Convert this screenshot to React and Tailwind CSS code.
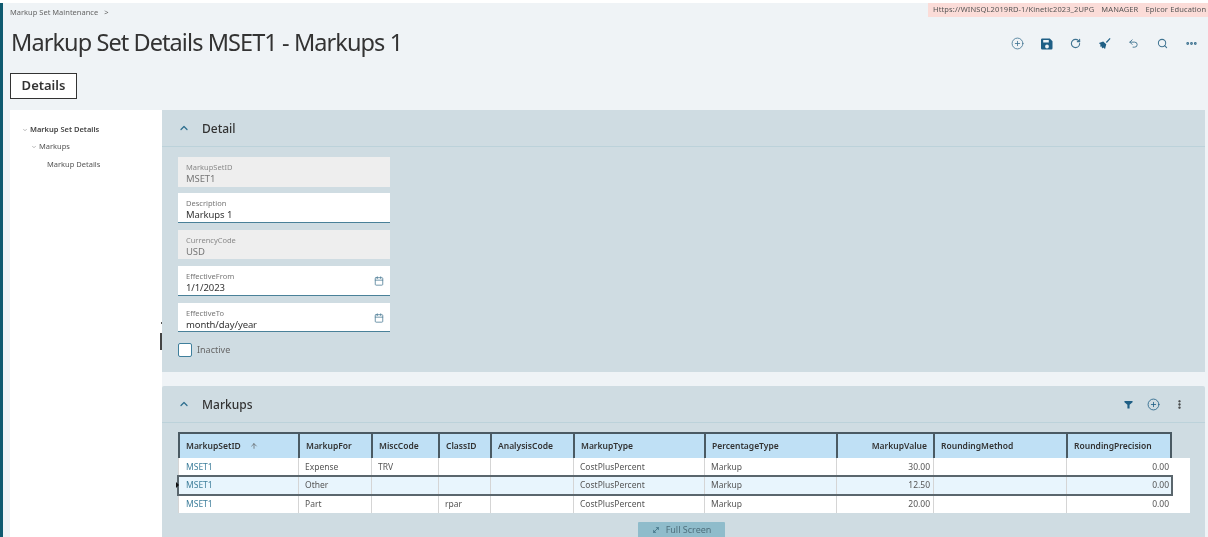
import React from "react";
import { CirclePlus, RotateCw, Undo2, Search, Ellipsis, ChevronUp, ChevronDown, ArrowUp, EllipsisVertical, Calendar, MoveDiagonal } from "lucide-react";

const cols = ["w-[120px]", "w-[73px]", "w-[67px]", "w-[52px]", "w-[83px]", "w-[131px]", "w-[132px]", "w-[97px]", "w-[133px]", "w-[106px]"];
const heads = ["MarkupSetID", "MarkupFor", "MiscCode", "ClassID", "AnalysisCode", "MarkupType", "PercentageType", "MarkupValue", "RoundingMethod", "RoundingPrecision"];
const rows = [
  ["MSET1", "Expense", "TRV", "", "", "CostPlusPercent", "Markup", "30.00", "", "0.00"],
  ["MSET1", "Other", "", "", "", "CostPlusPercent", "Markup", "12.50", "", "0.00"],
  ["MSET1", "Part", "", "rpar", "", "CostPlusPercent", "Markup", "20.00", "", "0.00"],
];

function Field({ label, value, disabled, date, mt }) {
  return (
    <div className={`${mt} w-[212px] h-[29.5px] px-[8px] pt-[5px] relative ${disabled ? "bg-[#eeeeee]" : "bg-white border-b border-[#4a8199]"}`}>
      <div className={`text-[7.5px] leading-[10px] ${disabled ? "text-[#8a8a8a]" : "text-[#777777]"}`}>{label}</div>
      <div className={`text-[9.5px] leading-[12px] mt-[1px] tracking-[-0.1px] ${disabled ? "text-[#777777]" : "text-[#333333]"}`}>{value}</div>
      {date && <Calendar className="absolute right-[6px] top-[10px] w-[10px] h-[10px] text-[#55829a]" strokeWidth={2} />}
    </div>
  );
}

function Save() {
  return (
    <svg viewBox="0 0 12 12" className="w-[12px] h-[12px] text-[#1f5f85]" fill="currentColor">
      <path d="M1.2 0.5h7.6L11.5 3.2v7.1a1.2 1.2 0 0 1-1.2 1.2H1.2A1.2 1.2 0 0 1 0 10.3V1.7A1.2 1.2 0 0 1 1.2.5zM2.2 2v2.6h5.6V2zM6 6.6a1.9 1.9 0 1 0 0 3.8 1.9 1.9 0 0 0 0-3.8z" fillRule="evenodd" />
    </svg>
  );
}

function Broom() {
  return (
    <svg viewBox="0 0 14 14" className="w-[13px] h-[13px] text-[#1f5f85]" fill="currentColor">
      <path d="M12.6 1.2l.9.8-4 4.4-1-.9z" />
      <path d="M1 6.5l4.6-1.6 3.3 3-1.3 5L5.6 11.4 4.6 12.4 3.6 10 2.2 10.4 2.8 8.4z" />
    </svg>
  );
}

function Filter() {
  return (
    <svg viewBox="0 0 10 10" className="w-[9px] h-[9px] text-[#1f5f85]" fill="currentColor">
      <path d="M0.5 1h9v1.6L6.2 5.4V9.5L3.8 9.5V5.4L.5 2.6z" />
    </svg>
  );
}

function Tool({ children }) {
  return <div className="w-[29px] flex justify-center">{children}</div>;
}

export default function App() {
  return (
    <div className="h-[537px] w-[1208px] overflow-hidden bg-white pt-[3px] blur-[0.35px]" style={{ fontFamily: '"Noto Sans", sans-serif' }}>
      <div className="h-[534px] border-l-[3px] border-[#0f5a70] bg-[#eff3f6] flex flex-col">
        <div className="flex items-start justify-between h-[14px] pl-[7px]">
          <div className="text-[7.5px] leading-[18px] text-[#666666] flex gap-[6px]">
            <span>Markup Set Maintenance</span><span>&gt;</span>
          </div>
          <div className="w-[280px] h-[14px] bg-[#fbdcd8] pl-[5px] text-[7.5px] leading-[13px] tracking-[0.12px] text-[#555555] whitespace-nowrap flex gap-[7px]">
            <span>Https://WINSQL2019RD-1/Kinetic2023_2UPG</span><span>MANAGER</span><span>Epicor Education</span>
          </div>
        </div>
        <div className="flex items-center justify-between h-[38px] mt-[6px] pl-[8px] pr-[2px]">
          <h1 className="text-[23.5px] leading-[38px] tracking-[-0.92px] text-[#333333]">Markup Set Details MSET1 - Markups 1</h1>
          <div className="flex items-center text-[#3f7391] mt-[3px]">
            <Tool><CirclePlus className="w-[13px] h-[13px]" strokeWidth={1.5} /></Tool>
            <Tool><Save /></Tool>
            <Tool><RotateCw className="w-[11px] h-[11px]" strokeWidth={2.4} /></Tool>
            <Tool><Broom /></Tool>
            <Tool><Undo2 className="w-[11px] h-[11px]" strokeWidth={2} /></Tool>
            <Tool><Search className="w-[11px] h-[11px]" strokeWidth={2.2} /></Tool>
            <Tool><Ellipsis className="w-[13px] h-[13px]" strokeWidth={3.2} /></Tool>
          </div>
        </div>
        <div className="pl-[7px] mt-[12px]">
          <div className="w-[67px] h-[26px] bg-white border border-[#333333] flex items-center justify-center text-[13px] font-semibold text-[#333333]">Details</div>
        </div>
        <div className="flex mt-[11px] pl-[7px] flex-1 min-h-0">
          <div className="w-[152px] bg-white pt-[14px] relative shrink-0">
            <div className="flex items-center h-[12px] pl-[12px] text-[7.5px] font-semibold text-[#444444]">
              <ChevronDown className="w-[6px] h-[6px] mr-[2px] text-[#777777]" /><span>Markup Set Details</span>
            </div>
            <div className="flex items-center h-[12px] mt-[5px] pl-[21px] text-[7.5px] text-[#555555]">
              <ChevronDown className="w-[6px] h-[6px] mr-[2px] text-[#777777]" /><span>Markups</span>
            </div>
            <div className="h-[12px] leading-[12px] mt-[5px] pl-[37px] text-[7.5px] text-[#555555]">Markup Details</div>
            <div className="absolute right-0 top-[212px] w-[1px] h-[2px] bg-[#555555]" />
            <div className="absolute right-0 top-[223px] w-[2px] h-[17px] bg-[#444444]" />
          </div>
          <div className="flex-1 min-w-0 pr-[3px] flex flex-col">
            <section className="h-[262px] bg-[#cfdce2] shrink-0">
              <div className="h-[37px] border-b border-[#bcd2da] flex items-center pl-[16px] gap-[12px]">
                <ChevronUp className="w-[12px] h-[12px] text-[#2f6f8f]" strokeWidth={2.5} />
                <span className="text-[12px] font-medium text-[#333333] mt-[2px]">Detail</span>
              </div>
              <div className="pl-[16px] pt-[10px]">
                <Field label="MarkupSetID" value="MSET1" disabled />
                <Field label="Description" value="Markups 1" mt="mt-[6.5px]" />
                <Field label="CurrencyCode" value="USD" disabled mt="mt-[7px]" />
                <Field label="EffectiveFrom" value="1/1/2023" date mt="mt-[7px]" />
                <Field label="EffectiveTo" value="month/day/year" date mt="mt-[7px]" />
                <div className="flex items-center mt-[11px] gap-[5px]">
                  <div className="w-[14px] h-[14px] bg-white border border-[#3f7f9c] rounded-[2px]" />
                  <span className="text-[9px] text-[#666666]">Inactive</span>
                </div>
              </div>
            </section>
            <section className="mt-[14px] flex-1 bg-[#cfdce2] rounded-t-[2px]">
              <div className="h-[37px] border-b border-[#bcd2da] flex items-center pl-[16px] pr-[20px] gap-[12px]">
                <ChevronUp className="w-[12px] h-[12px] text-[#2f6f8f]" strokeWidth={2.5} />
                <span className="text-[12px] font-medium text-[#333333] mt-[2px]">Markups</span>
                <div className="ml-auto flex items-center gap-[14px] text-[#1f5f85]">
                  <Filter />
                  <CirclePlus className="w-[13px] h-[13px]" strokeWidth={1.5} />
                  <EllipsisVertical className="w-[11px] h-[11px] text-[#333333]" strokeWidth={3} />
                </div>
              </div>
              <div className="pl-[16px] pt-[9px]">
                <div className="flex h-[26px] w-[994px]">
                  {heads.map((h, i) => (
                    <div key={h} className={`${cols[i]} border-2 border-b-0 border-r-0 ${i === 9 ? "border-r-2" : ""} border-[#4a5a63] bg-[#bfe0f5] flex items-center text-[8.5px] font-semibold text-[#333333] ${i === 7 ? "justify-end pr-[6px]" : "pl-[6px]"}`}>
                      <span>{h}</span>
                      {i === 0 && <ArrowUp className="w-[8px] h-[8px] ml-[9px] text-[#555555]" />}
                    </div>
                  ))}
                </div>
                <div className="w-[1012px] bg-white relative">
                  {rows.map((r, ri) => (
                    <div key={ri} className={`flex h-[18.4px] w-[994px] ${ri === 1 ? "bg-[#e8f5fd] outline-2 -outline-offset-1 outline-[#5a666d]" : "bg-white"}`}>
                      {r.map((c, i) => (
                        <div key={i} className={`${cols[i]} border-l border-[#d5d5d5] ${ri === 1 && i > 0 ? "border-[#5a666d]" : ""} text-[8.5px] leading-[18px] pl-[6px] whitespace-nowrap ${i === 0 ? "text-[#3f7f9c] pl-[7px]" : "text-[#555555]"} ${i === 7 || i === 9 ? "text-right pr-[3px]" : ""}`}>{c}</div>
                      ))}
                    </div>
                  ))}
                  <div className="absolute left-[-2px] top-[24px] w-0 h-0 border-y-[3px] border-y-transparent border-l-[3px] border-l-[#111111]" />
                </div>
                <div className="flex justify-center w-[1007px] mt-[9px]">
                  <div className="w-[87px] h-[15px] bg-[#8fbccb] rounded-t-[1px] flex items-center justify-center gap-[6px] text-[9px] text-[#4f6f7c]">
                    <MoveDiagonal className="w-[8px] h-[8px] text-[#2f5f73]" />
                    <span>Full Screen</span>
                  </div>
                </div>
              </div>
            </section>
          </div>
        </div>
      </div>
    </div>
  );
}
